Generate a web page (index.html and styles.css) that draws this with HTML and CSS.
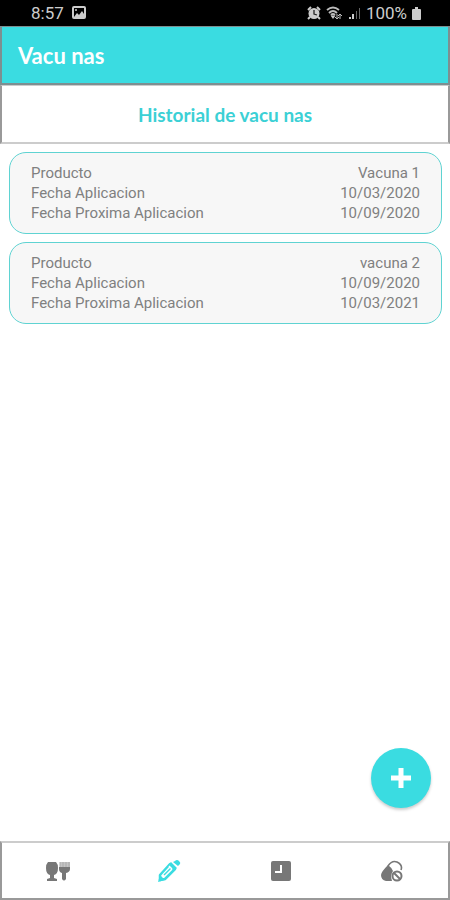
FILE: index.html
```
<!DOCTYPE html>
<html lang="es">
<head>
  <meta charset="UTF-8">
  <meta name="viewport" content="width=device-width, initial-scale=1.0">
  <title>Vacunas</title>
  <link rel="stylesheet" href="styles.css">
</head>
<body>
  <div class="status-bar">
    <span class="time">8:57</span>
    <svg width="14" height="14" viewBox="0 0 14 14">
      <rect x="1" y="1" width="12" height="11" rx="1" fill="none" stroke="#ccc" stroke-width="2"/>
      <path d="M2 11 5 7l2 2 3-4 2 3v4H2z" fill="#ccc"/>
      <circle cx="4" cy="4" r="1" fill="#ccc"/>
    </svg>
    <div class="status-icons">
      <svg width="14" height="14" viewBox="0 0 14 14">
        <path d="M1 4 4 1M13 4l-3-3M3 11l-2 2M11 11l2 2" stroke="#ccc" stroke-width="2"/>
        <circle cx="7" cy="7.5" r="5.5" fill="#ccc"/>
        <path d="M7 4v4l3 1" fill="none" stroke="#222" stroke-width="1.3"/>
      </svg>
      <svg width="17" height="14" viewBox="0 0 17 14">
        <path d="M1 4q6-5 12 0M3 7q4-4 8 0M5 9q2-2 4 0" fill="none" stroke="#bbb" stroke-width="1.9"/>
        <path d="M7 13 4.500 9.500h5z" fill="#ccc"/>
        <path d="M11 8v5M9 11l2 2 2-2M14 13V8M12 10l2-2 2 2" fill="none" stroke="#bbb"/>
      </svg>
      <svg width="13" height="14" viewBox="0 0 13 14">
        <path d="M1 11h2v2H1zM4 8h2v5H4z" fill="#ccc"/>
        <path d="M8 5h1v8H8zM11 2h1v11h-1z" fill="#666"/>
      </svg>
      <span class="battery">100%</span>
      <svg width="9" height="13" viewBox="0 0 9 13">
        <path d="M3 0h3v2h2q1 0 1 1v9q0 1-1 1H1q-1 0-1-1V3q0-1 1-1h2z" fill="#ccc"/>
      </svg>
    </div>
  </div>

  <header class="app-bar">
    <h1>Vacu nas</h1>
  </header>

  <div class="subtitle">
    <h2>Historial de vacu nas</h2>
  </div>

  <main class="content">
    <dl class="card">
      <div class="row"><dt>Producto</dt><dd>Vacuna 1</dd></div>
      <div class="row"><dt>Fecha Aplicacion</dt><dd>10/03/2020</dd></div>
      <div class="row"><dt>Fecha Proxima Aplicacion</dt><dd>10/09/2020</dd></div>
    </dl>
    <dl class="card">
      <div class="row"><dt>Producto</dt><dd>vacuna 2</dd></div>
      <div class="row"><dt>Fecha Aplicacion</dt><dd>10/09/2020</dd></div>
      <div class="row"><dt>Fecha Proxima Aplicacion</dt><dd>10/03/2021</dd></div>
    </dl>
    <button class="fab" type="button" aria-label="Agregar vacuna">
      <svg width="20" height="20" viewBox="0 0 20 20">
        <path d="M10 0v20M0 10h20" stroke="#fff" stroke-width="5"/>
      </svg>
    </button>
  </main>

  <nav class="tabs">
    <a href="#comida" aria-label="Comida">
      <svg width="26" height="22" viewBox="0 0 26 22">
        <path d="M3 2h8q2 2 2 6 0 6-4 7v3l3 1v2H2v-2l3-1v-3q-4-1-4-7 0-4 2-6z" fill="#777"/>
        <path d="M15 2h10v5H15z" fill="#c4c4c4"/>
        <path d="M15 2v5M18 2v5M21 2v5M24 2v5" stroke="#aaa"/>
        <path d="M14 7h11v2q0 3-4 4v6q-2 3-4 0v-6q-3-1-3-4z" fill="#777"/>
      </svg>
    </a>
    <a href="#vacunas" aria-label="Vacunas">
      <svg width="24" height="24" viewBox="0 0 24 24">
        <path d="M3 16 13 5l5 5L8 20l-5 1z" fill="none" stroke="#3adce1" stroke-width="2.500" stroke-linejoin="round"/>
        <path d="m1 23 2-7 5 5zM11 6l3-3 6 6-3 3zM18 2q2-2 4 0t1 3l-2 2-5-4z" fill="#3adce1"/>
        <path d="m7 16 8-8" stroke="#3adce1" stroke-width="1.500"/>
        <path d="m12 7 3 3" stroke="#fff" stroke-width="1.500"/>
      </svg>
    </a>
    <a href="#agenda" aria-label="Agenda">
      <svg width="20" height="20" viewBox="0 0 20 20">
        <rect width="20" height="20" rx="2" fill="#777"/>
        <path d="M10 4v7H4" fill="none" stroke="#fff" stroke-width="2"/>
      </svg>
    </a>
    <a href="#medicina" aria-label="Medicina">
      <svg width="22" height="22" viewBox="0 0 22 22">
        <path d="M7 6q4-6 9-4 6 3 4 8" fill="none" stroke="#777" stroke-width="1.600"/>
        <path d="M7 5q3 2 5 6-3 4-1 10H5q-5-1-5-6 0-3 7-10z" fill="#777"/>
        <circle cx="16" cy="16" r="4.500" fill="#fff" stroke="#777" stroke-width="2"/>
        <path d="m13 13 6 6" stroke="#777" stroke-width="2"/>
      </svg>
    </a>
  </nav>
</body>
</html>
```
FILE: styles.css
```
* {
  box-sizing: border-box;
}

body {
  display: flex;
  flex-direction: column;
  min-height: 100vh;
  margin: 0;
  font-family: Roboto, sans-serif;
  background-color: #fff;
}

.status-bar {
  display: flex;
  align-items: center;
  gap: 8px;
  height: 26px;
  padding: 0 29px 0 31px;
  background-color: #000;
  color: #ccc;
  font-size: 17px;
}

.status-icons {
  display: flex;
  align-items: center;
  gap: 5px;
  margin-left: auto;
}

.app-bar {
  display: flex;
  align-items: center;
  height: 59px;
  padding: 0 16px;
  border: 2px solid #7d8f91;
  border-top-width: 1px;
  background-color: #3adce1;
}

h1,
h2 {
  margin: 0;
  font-family: Lato, sans-serif;
  font-weight: 700;
}

h1 {
  color: #fff;
  font-size: 22px;
}

.subtitle {
  display: flex;
  align-items: center;
  justify-content: center;
  height: 59px;
  border: 2px solid #999;
  border-top: 1px solid #ccc;
  border-bottom-color: #ccc;
}

h2 {
  color: #3bd0d5;
  font-size: 19px;
}

.content {
  display: flex;
  flex: 1;
  flex-direction: column;
  gap: 8px;
  padding: 8px 8px 0 9px;
}

.card {
  margin: 0;
  padding: 10px 21px;
  border: 1px solid #5fd3d2;
  border-radius: 17px;
  background-color: #f7f7f7;
  color: #808080;
  font-size: 15px;
  line-height: 20px;
}

.row {
  display: flex;
  justify-content: space-between;
}

dd {
  margin: 0;
}

.fab {
  position: fixed;
  right: 19px;
  bottom: 92px;
  display: flex;
  align-items: center;
  justify-content: center;
  width: 60px;
  height: 60px;
  padding: 0;
  border: none;
  border-radius: 50%;
  background-color: #3adce1;
  box-shadow: 0 2px 3px #ccc;
  cursor: pointer;
}

.tabs {
  display: grid;
  grid-template-columns: repeat(4, 1fr);
  height: 59px;
  border: 2px solid #999;
  border-top-color: #ccc;
}

.tabs a {
  display: flex;
  align-items: center;
  justify-content: center;
}
```
